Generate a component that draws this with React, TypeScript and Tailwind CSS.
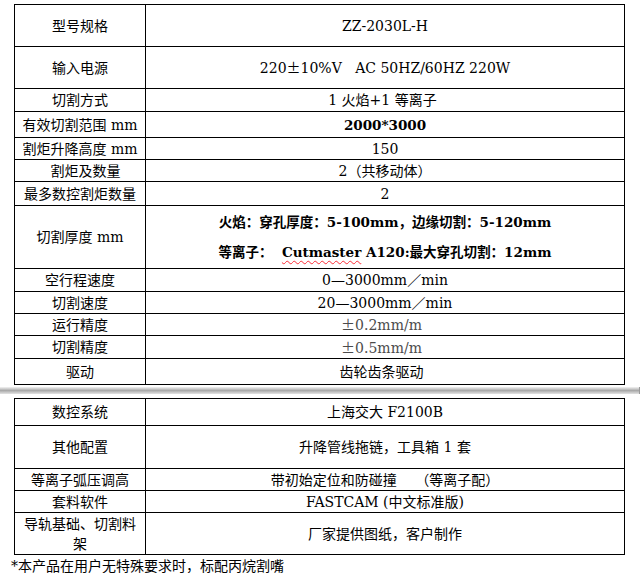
const font = { fontFamily: '"DejaVu Serif", "Noto Sans CJK SC", serif' };

type Row = { h: string; label: React.ReactNode; value: React.ReactNode; labelClass?: string; valueClass?: string };

// full-width plus-minus, as in the source document
const PM = () => <span style={{ fontFamily: '"Noto Sans CJK SC", sans-serif' }}>±</span>;

const table1: Row[] = [
  { h: 'h-[42px]', label: '型号规格', value: 'ZZ-2030L-H' },
  { h: 'h-[42px]', label: '输入电源', value: <>220<PM />10%V   AC 50HZ/60HZ 220W</> },
  { h: 'h-[23px]', label: '切割方式', value: '1 火焰+1 等离子', valueClass: 'pr-[12px]' },
  { h: 'h-[26px]', label: '有效切割范围 mm', value: '2000*3000', valueClass: 'font-bold text-[13.5px]' },
  { h: 'h-[22px]', label: '割炬升降高度 mm', value: '150' },
  { h: 'h-[22px]', label: '割炬及数量', labelClass: 'pl-[18px]', value: '2（共移动体）' },
  { h: 'h-[24px]', label: '最多数控割炬数量', value: '2' },
  {
    h: 'h-[63px]',
    label: '切割厚度 mm',
    value: (
      <div className="flex flex-col gap-[10px] font-bold text-[13.5px]">
        <span>火焰：穿孔厚度：5-100mm，边缘切割：5-120mm</span>
        <span>
          等离子：&nbsp;&nbsp;
          <span className="underline decoration-wavy decoration-red-500 decoration-1 underline-offset-[3px]">Cutmaster</span>
          {' '}A120:最大穿孔切割：12mm
        </span>
      </div>
    ),
  },
  { h: 'h-[23px]', label: '空行程速度', value: '0—3000mm／min' },
  { h: 'h-[22px]', label: '切割速度', value: '20—3000mm／min' },
  { h: 'h-[22px]', label: '运行精度', value: <><PM />0.2mm/m</>, valueClass: 'text-[#4b4b4b] pr-[14px]' },
  { h: 'h-[23px]', label: '切割精度', value: <><PM />0.5mm/m</>, valueClass: 'text-[#4b4b4b] pr-[14px]' },
  { h: 'h-[26px]', label: '驱动', value: '齿轮齿条驱动', valueClass: 'pr-[14px]' },
];

const table2: Row[] = [
  { h: 'h-[27px]', label: '数控系统', value: '上海交大 F2100B' },
  { h: 'h-[43px]', label: '其他配置', value: '升降管线拖链，工具箱 1 套' },
  { h: 'h-[22px]', label: '等离子弧压调高', value: '带初始定位和防碰撞　 （等离子配）' },
  { h: 'h-[22px]', label: '套料软件', value: 'FASTCAM (中文标准版)' },
  { h: 'h-[42px]', label: '导轨基础、切割料架', value: '厂家提供图纸，客户制作' },
];

function SpecTable({ rows }: { rows: Row[] }) {
  return (
    <table className="ml-[14px] w-[611px] table-fixed border-collapse text-[14px] leading-[20px] text-black">
      <colgroup>
        <col className="w-[131px]" />
        <col />
      </colgroup>
      <tbody>
        {rows.map((r, i) => (
          <tr key={i} className={r.h}>
            <td className={`border border-black px-[7px] py-0 text-center ${r.labelClass ?? ''}`}>{r.label}</td>
            <td className={`border border-black px-[7px] py-0 text-center whitespace-pre ${r.valueClass ?? ''}`}>{r.value}</td>
          </tr>
        ))}
      </tbody>
    </table>
  );
}

export default function App() {
  return (
    <div className="w-[640px] h-[573px] bg-white overflow-hidden" style={font}>
      <div className="pt-[4px]">
        <SpecTable rows={table1} />
      </div>
      <div className="mt-[2px] flex items-stretch h-[7px]">
        <div className="flex-1 bg-gradient-to-b from-[#f4f4f4] via-[#a9a9a9] to-[#e4e4e4]" />
        <div className="w-px bg-[#9a9a9a]" />
      </div>
      <div className="mt-[4px]">
        <SpecTable rows={table2} />
      </div>
      <div className="pl-[11px] pt-[1px] text-[14px] leading-[20px] text-black">*本产品在用户无特殊要求时，标配丙烷割嘴</div>
    </div>
  );
}
